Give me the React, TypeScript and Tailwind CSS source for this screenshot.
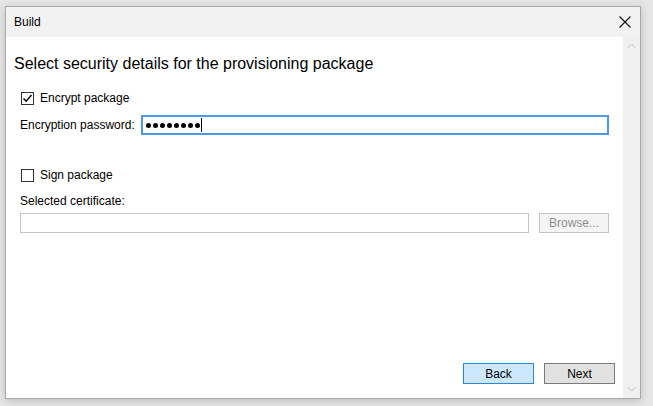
import React from "react";

function Check({ checked }: { checked: boolean }) {
  return (
    <div className="w-[13px] h-[13px] border border-[#333333] bg-white flex items-center justify-center shrink-0">
      {checked && (
        <svg width="11" height="11" viewBox="0 0 11 11">
          <path d="M1.5 5.5 L4.2 8.3 L9.5 2" fill="none" stroke="#000" strokeWidth="1.4" />
        </svg>
      )}
    </div>
  );
}

export default function App() {
  const dots = [0, 1, 2, 3, 4, 5, 6, 7];
  return (
    <div
      className="w-[653px] h-[406px] bg-[#e6e6e6] pt-[6px] pl-[5px] overflow-hidden"
      style={{ fontFamily: '"Liberation Sans", Arial, sans-serif' }}
    >
      <div className="w-[636px] h-[393px] border border-[#a9a9a9] bg-white flex flex-col shadow-[0_2px_8px_rgba(0,0,0,0.18)]">
        <div className="h-[30px] bg-[#f2f2f2] flex items-center justify-between pl-[8px] pr-[9px] shrink-0">
          <span className="text-[12px] text-black leading-none">Build</span>
          <svg width="12" height="12" viewBox="0 0 12 12">
            <path d="M0.5 0.5 L11.5 11.5 M11.5 0.5 L0.5 11.5" stroke="#111" strokeWidth="1.1" fill="none" />
          </svg>
        </div>
        <div className="flex flex-1 min-h-0">
          <div className="flex-1 flex flex-col pl-[8px] pr-[14px] pb-[14px]">
            <div className="mt-[16px] text-[16px] leading-[22px] text-black">
              Select security details for the provisioning package
            </div>
            <div className="ml-[7px] mt-[14px] h-[18px] flex items-center gap-[6px]">
              <Check checked={true} />
              <span className="text-[12px] text-black">Encrypt package</span>
            </div>
            <div className="ml-[6px] mt-[8px] flex items-center">
              <span className="w-[121px] text-[12px] text-black">Encryption password:</span>
              <div className="flex-1 h-[20px] border-2 border-[#4f98e3] flex items-center pl-[3px]">
                <div className="flex items-center gap-[2px]">
                  {dots.map((d) => (
                    <div key={d} className="w-[5px] h-[5px] rounded-full bg-black" />
                  ))}
                </div>
                <div className="w-[1px] h-[14px] bg-black ml-[1px]" />
              </div>
            </div>
            <div className="ml-[7px] mt-[31px] h-[18px] flex items-center gap-[6px]">
              <Check checked={false} />
              <span className="text-[12px] text-black">Sign package</span>
            </div>
            <div className="ml-[6px] mt-[9px] text-[12px] leading-[16px] text-black">Selected certificate:</div>
            <div className="ml-[6px] mt-[4px] flex items-center gap-[10px]">
              <div className="flex-1 h-[20px] border border-[#c4c4c4] bg-white" />
              <div className="w-[70px] h-[20px] border border-[#c4c4c4] bg-[#f4f4f4] flex items-center justify-center text-[12px] text-[#8f8f8f]">
                Browse...
              </div>
            </div>
            <div className="flex-1" />
            <div className="flex justify-end gap-[10px] -mr-[6px]">
              <div className="w-[71px] h-[21px] border border-[#2f86d2] bg-[#cce8ff] flex items-center justify-center text-[12px] text-black">
                Back
              </div>
              <div className="w-[71px] h-[21px] border border-[#7a7a7a] bg-[#e1e1e1] flex items-center justify-center text-[12px] text-black">
                Next
              </div>
            </div>
          </div>
          <div className="w-[17px] bg-[#f0f0f0] flex flex-col items-center justify-between py-[6px] shrink-0">
            <svg width="9" height="6" viewBox="0 0 9 6">
              <path d="M0.5 5 L4.5 1 L8.5 5" fill="none" stroke="#c2c2c2" strokeWidth="1" />
            </svg>
            <svg width="9" height="6" viewBox="0 0 9 6">
              <path d="M0.5 1 L4.5 5 L8.5 1" fill="none" stroke="#c2c2c2" strokeWidth="1" />
            </svg>
          </div>
        </div>
      </div>
    </div>
  );
}
